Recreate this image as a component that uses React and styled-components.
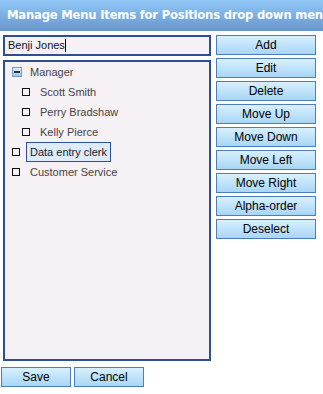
import React from 'react';
import styled, { createGlobalStyle } from 'styled-components';

const GlobalStyle = createGlobalStyle`
  body {
    margin: 0;
    background: #fff;
    font-family: "Liberation Sans", Arial, sans-serif;
  }
`;

const TitleBar = styled.div`
  height: 31px;
  background: linear-gradient(#92c8f8, #6796cd);
  color: #fff;
  font-family: "DejaVu Sans", Verdana, sans-serif;
  font-weight: bold;
  font-size: 11.6px;
  letter-spacing: -0.2px;
  line-height: 31px;
  padding-left: 7px;
  white-space: nowrap;
  overflow: hidden;
`;

const Body = styled.div`
  padding: 4px 0 0 3px;
`;

const Main = styled.div`
  display: flex;
  gap: 5px;
`;

const LeftCol = styled.div`
  width: 208px;
  display: flex;
  flex-direction: column;
  gap: 4px;
`;

const NameInput = styled.div`
  height: 17px;
  border: 2px solid #2d4f94;
  background: #f6f1f5;
  font-size: 11px;
  line-height: 17px;
  padding-left: 3px;
  color: #111;
  display: flex;
  align-items: center;
`;

const Caret = styled.span`
  display: inline-block;
  width: 1px;
  height: 13px;
  background: #000;
`;

const Tree = styled.div`
  height: 297px;
  border: 2px solid #2d4f94;
  background: #f6f1f5;
`;

const Row = styled.div`
  height: 20px;
  display: flex;
  align-items: center;
  padding-left: ${p => p.indent ? 17 : 7}px;
  color: #444;
  font-size: 11px;
`;

const Box = styled.span`
  width: 6px;
  height: 6px;
  border: 1px solid #111;
  flex: none;
  margin-right: ${p => p.gap}px;
`;

const Label = styled.span`
  padding: ${p => p.selected ? '3px 3px' : '0'};
  border: ${p => p.selected ? '1px solid #2d4f94' : 'none'};
  background: ${p => p.selected ? '#ddebfb' : 'transparent'};
  color: ${p => p.selected ? '#222' : '#444'};
`;

const RightCol = styled.div`
  display: flex;
  flex-direction: column;
  gap: 3px;
`;

const Btn = styled.button`
  width: ${p => p.w || 100}px;
  height: 20px;
  border: 1px solid #4d7dbd;
  background: linear-gradient(#d8f0ff, #a8d6f5);
  font-family: "Liberation Sans", Arial, sans-serif;
  font-size: 12px;
  color: #000;
  padding: 0;
  cursor: pointer;
`;

const Footer = styled.div`
  display: flex;
  gap: 3px;
  margin-top: 6px;
  margin-left: -2px;
`;

const Minus = () => (
  <svg width="10" height="10" viewBox="0 0 10 10" style={{ marginRight: 8, flex: 'none' }}>
    <defs>
      <linearGradient id="mg" x1="0" y1="0" x2="0" y2="1">
        <stop offset="0" stopColor="#e8f2fb" />
        <stop offset="1" stopColor="#9cc3e6" />
      </linearGradient>
    </defs>
    <rect x="0.5" y="0.5" width="9" height="9" fill="url(#mg)" stroke="#6f9dcb" />
    <rect x="2" y="4" width="6" height="2" fill="#333" />
  </svg>
);

const items = [
  { name: 'Scott Smith', indent: true },
  { name: 'Perry Bradshaw', indent: true },
  { name: 'Kelly Pierce', indent: true },
  { name: 'Data entry clerk', selected: true },
  { name: 'Customer Service' },
];

const actions = ['Add', 'Edit', 'Delete', 'Move Up', 'Move Down', 'Move Left', 'Move Right', 'Alpha-order', 'Deselect'];

export default function App() {
  return (
    <>
      <GlobalStyle />
      <TitleBar>Manage Menu Items for Positions drop down menu</TitleBar>
      <Body>
        <Main>
          <LeftCol>
            <NameInput>Benji Jones<Caret /></NameInput>
            <Tree>
              <Row>
                <Minus />
                <Label>Manager</Label>
              </Row>
              {items.map(it => (
                <Row key={it.name} indent={it.indent}>
                  <Box gap={it.selected ? 6 : 10} />
                  <Label selected={it.selected}>{it.name}</Label>
                </Row>
              ))}
            </Tree>
          </LeftCol>
          <RightCol>
            {actions.map(a => <Btn key={a}>{a}</Btn>)}
          </RightCol>
        </Main>
        <Footer>
          <Btn w={70}>Save</Btn>
          <Btn w={70}>Cancel</Btn>
        </Footer>
      </Body>
    </>
  );
}
